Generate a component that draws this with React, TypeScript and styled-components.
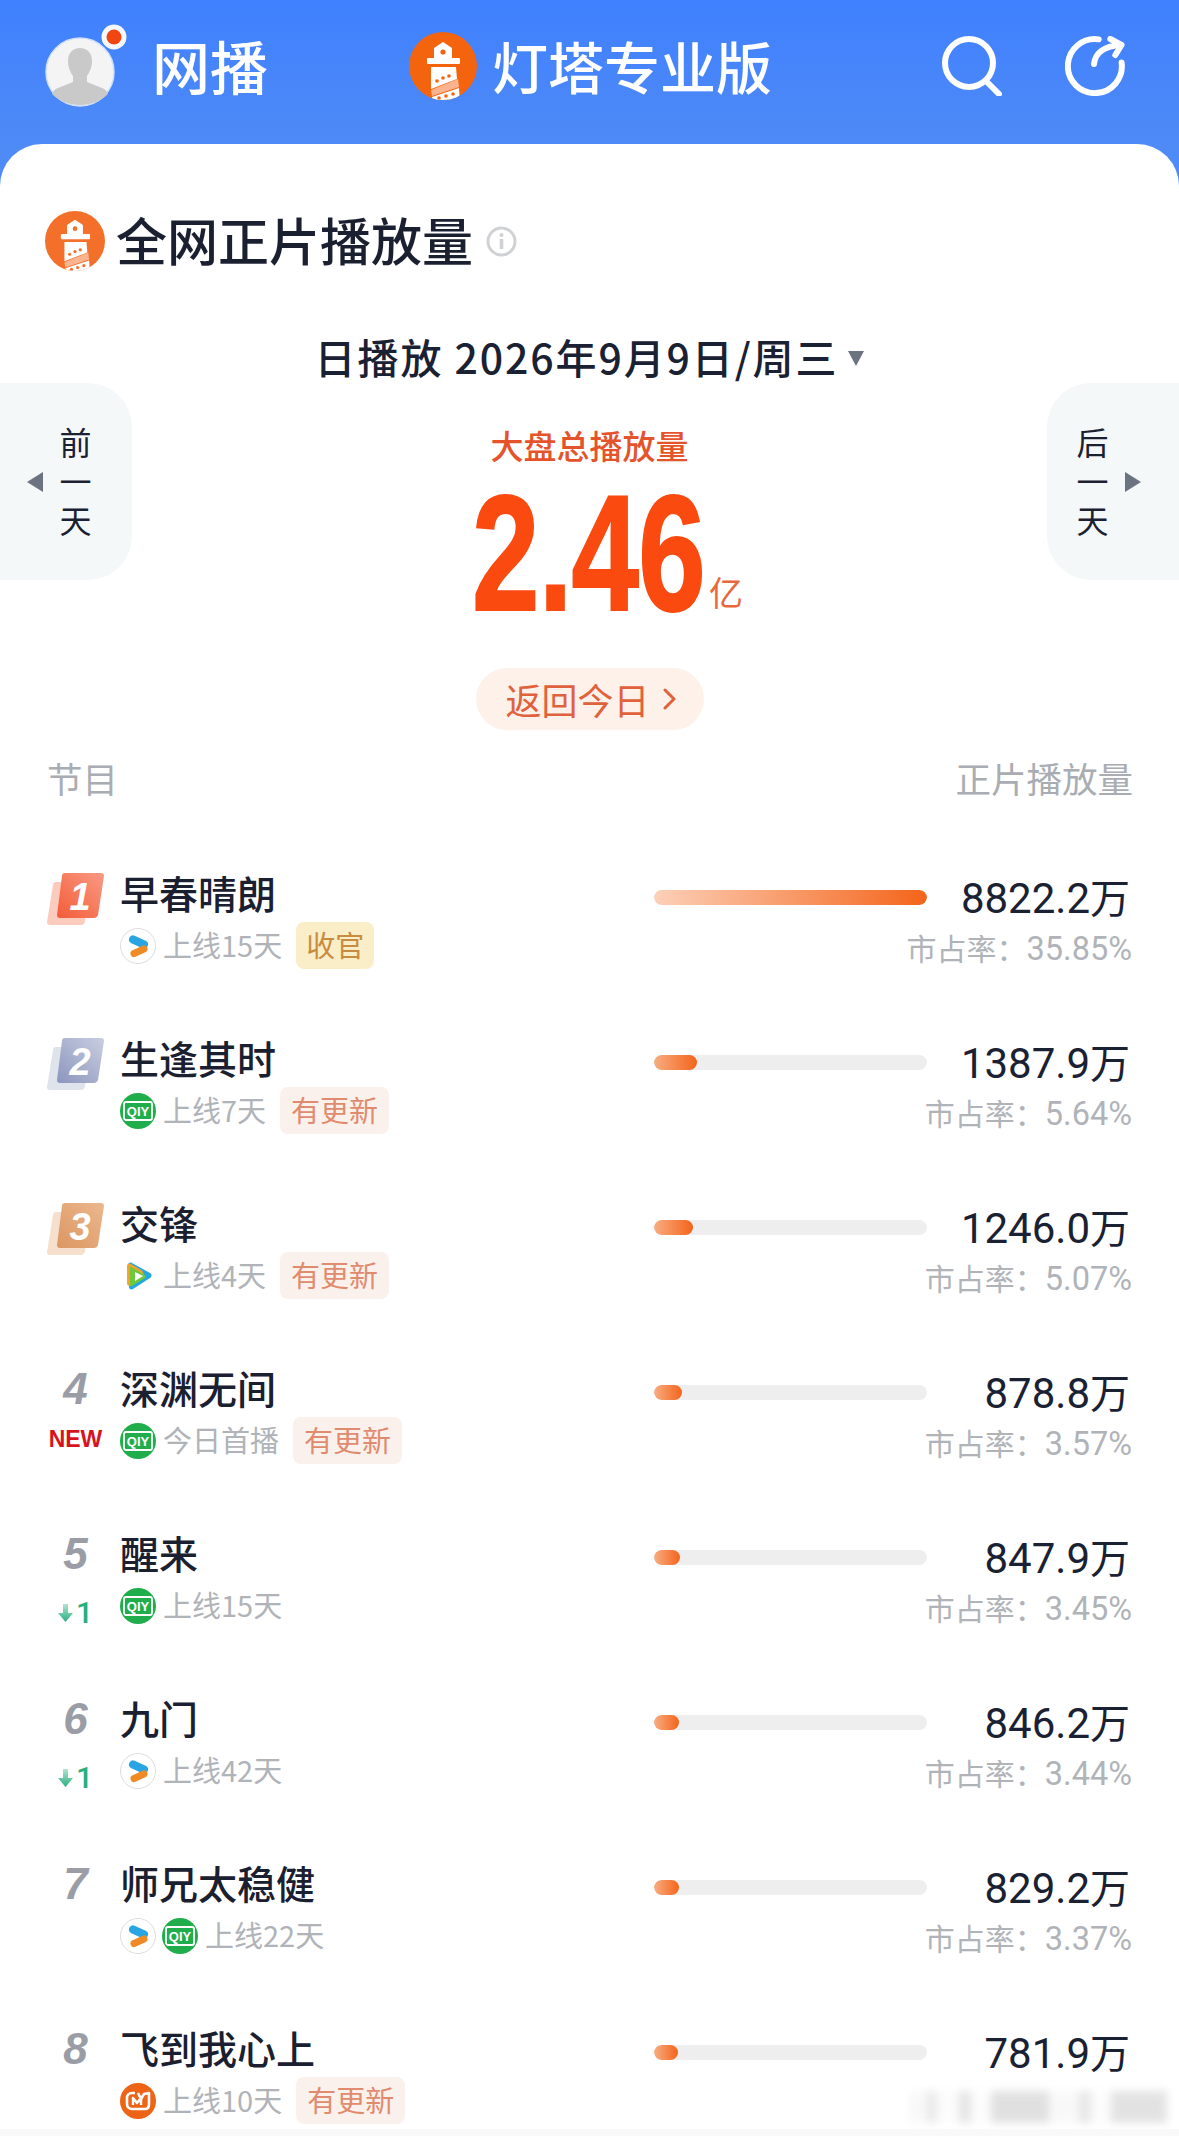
import React from 'react';
import styled, { createGlobalStyle } from 'styled-components';

const GlobalStyle = createGlobalStyle`
  html, body {
    margin: 0;
    padding: 0;
    background: #fff;
  }
  * {
    box-sizing: border-box;
  }
`;

const CJK = `"Noto Sans CJK SC", "Noto Sans", sans-serif`;

const Page = styled.div`
  position: relative;
  width: 1179px;
  height: 2136px;
  overflow: hidden;
  font-family: ${CJK};
  background: linear-gradient(180deg, #3f80fe 0, #4f8bf6 150px);
`;

const Header = styled.header`
  display: flex;
  align-items: center;
  height: 144px;
  padding: 0 54px 12px 45px;
  color: #fff;
`;

const HeaderTitle = styled.span`
  margin-left: 24px;
  margin-top: -3px;
  font-size: 58px;
  line-height: 70px;
  font-weight: 500;
`;

const Brand = styled.div`
  display: flex;
  align-items: center;
  gap: 15px;
  margin-left: 141px;
`;

const BrandName = styled.span`
  margin-top: -3px;
  font-size: 56px;
  line-height: 70px;
  font-weight: 500;
`;

const HeaderActions = styled.div`
  display: flex;
  align-items: center;
  gap: 63px;
  margin-left: auto;
`;

const Card = styled.main`
  height: 1992px;
  padding-top: 67px;
  background: #fff;
  border-radius: 42px 42px 0 0;
`;

const CardTitle = styled.div`
  display: flex;
  align-items: center;
  height: 60px;
  padding-left: 45px;
`;

const CardTitleText = styled.h1`
  margin: -4px 13px 0 11px;
  font-size: 51px;
  line-height: 60px;
  font-weight: 500;
  color: #1a2030;
`;

const DateRow = styled.div`
  display: flex;
  align-items: center;
  justify-content: center;
  gap: 10px;
  height: 50px;
  margin-top: 60px;
  font-size: 41px;
  line-height: 46px;
  font-weight: 500;
  letter-spacing: 1.9px;
  color: #1a2133;
`;

const DateCaret = styled.i`
  width: 0;
  height: 0;
  margin-top: 4px;
  border-left: 8px solid transparent;
  border-right: 8px solid transparent;
  border-top: 15px solid #6b7280;
`;

const Hero = styled.section`
  display: flex;
  align-items: flex-start;
  justify-content: space-between;
  margin-top: 2px;
`;

const SideButton = styled.div<{ $side: 'left' | 'right' }>`
  display: flex;
  flex-direction: ${({ $side }) => ($side === 'left' ? 'row' : 'row-reverse')};
  align-items: center;
  gap: 16px;
  width: 132px;
  height: 197px;
  padding-bottom: 3px;
  padding-left: ${({ $side }) => ($side === 'left' ? '27px' : '0')};
  padding-right: ${({ $side }) => ($side === 'right' ? '38px' : '0')};
  background: #f5f8f8;
  border-radius: ${({ $side }) =>
    $side === 'left' ? '0 44px 44px 0' : '44px 0 0 44px'};
`;

const SideArrow = styled.i<{ $side: 'left' | 'right' }>`
  flex: none;
  width: 0;
  height: 0;
  margin-top: 3px;
  border-top: 10px solid transparent;
  border-bottom: 10px solid transparent;
  ${({ $side }) =>
    $side === 'left'
      ? 'border-right: 16px solid #6b7280;'
      : 'border-left: 16px solid #6b7280;'}
`;

const SideLabel = styled.div`
  width: 33px;
  font-size: 32px;
  line-height: 39px;
  text-align: center;
  color: #1a2133;
`;

const HeroCenter = styled.div`
  display: flex;
  flex-direction: column;
  align-items: center;
  height: 235px;
  padding-top: 42px;
`;

const HeroLabel = styled.div`
  font-size: 33px;
  line-height: 40px;
  font-weight: 500;
  color: #e5532b;
`;

const HeroNumberRow = styled.div`
  display: flex;
  align-items: flex-end;
  margin: 23px 0 0 36px;
  height: 130px;
`;

const HeroNumber = styled.div`
  width: 237px;
  font-family: "Liberation Sans", Arial, sans-serif;
  font-size: 166px;
  line-height: 130px;
  font-weight: 700;
  letter-spacing: -1px;
  color: #fb4a10;
  transform: scaleX(0.73);
  transform-origin: left center;
  -webkit-text-stroke: 2px #fb4a10;
`;

const HeroUnit = styled.span`
  margin-bottom: 4px;
  font-size: 34px;
  line-height: 44px;
  color: #e9673c;
`;

const TodayPill = styled.div`
  display: flex;
  align-items: center;
  justify-content: flex-start;
  gap: 13px;
  width: 228px;
  height: 62px;
  margin: 50px auto 0;
  padding-left: 30px;
  font-size: 36px;
  line-height: 58px;
  color: #e0623c;
  background: #fdf1ea;
  border-radius: 31px;
`;

const TableHead = styled.div`
  display: flex;
  justify-content: space-between;
  margin-top: 26px;
  padding: 0 46px 0 47px;
  font-size: 35.5px;
  line-height: 44px;
  color: #a9adb3;
`;

const RowList = styled.div`
  margin-top: 70px;
`;

const Row = styled.article`
  position: relative;
  display: flex;
  height: 165px;
  padding: 0 47px;
`;

const RankCol = styled.div`
  display: flex;
  flex-direction: column;
  align-items: center;
  flex: none;
  width: 57px;
  margin-right: 16px;
`;

const RankCell = styled.div`
  display: flex;
  align-items: center;
  justify-content: center;
  height: 48px;
`;

const RankNumber = styled.span`
  font-family: "Liberation Sans", Arial, sans-serif;
  font-size: 44px;
  line-height: 48px;
  font-weight: 700;
  font-style: italic;
  color: #9a9da6;
`;

const RankBadgeWrap = styled.div`
  height: 52px;
  margin-top: 3px;
`;

const RankNote = styled.div<{ $down?: boolean }>`
  display: flex;
  align-items: center;
  justify-content: center;
  height: 47px;
  margin-top: ${({ $down }) => ($down ? '11px' : '3px')};
  gap: 3px;
`;

const NewMark = styled.span`
  font-family: "Liberation Sans", Arial, sans-serif;
  font-size: 23px;
  font-weight: 700;
  color: #d8131f;
`;

const DownValue = styled.span`
  font-family: Roboto, sans-serif;
  font-size: 30px;
  font-weight: 500;
  color: #26b07e;
`;

const InfoCol = styled.div`
  flex: 1;
  min-width: 0;
`;

const ShowName = styled.h2`
  margin: -2px 0 2px;
  font-size: 39px;
  line-height: 48px;
  font-weight: 500;
  color: #1a2030;
`;

const MetaRow = styled.div`
  display: flex;
  align-items: center;
  height: 47px;
  margin-top: 6px;
`;

const PlatformIcons = styled.div`
  display: flex;
  gap: 6px;
  margin-right: 7px;
`;

const MetaText = styled.span`
  margin-top: -2px;
  font-size: 29px;
  line-height: 47px;
  color: #b0b3b8;
`;

const Tag = styled.span<{ $tone: 'gold' | 'rose' }>`
  height: 47px;
  margin-left: 14px;
  padding: 0 ${({ $tone }) => ($tone === 'gold' ? '10px' : '11px')};
  font-size: 29px;
  line-height: 45px;
  border-radius: 8px;
  color: ${({ $tone }) => ($tone === 'gold' ? '#c98c3e' : '#e08b6e')};
  background: ${({ $tone }) => ($tone === 'gold' ? '#faeec9' : '#fbf1ec')};
`;

const BarTrack = styled.div`
  flex: none;
  width: 273px;
  height: 15px;
  margin-top: 20px;
  background: #eeeeee;
  border-radius: 8px;
  overflow: hidden;
`;

const BarFill = styled.div<{ $full: boolean }>`
  height: 100%;
  border-radius: 8px;
  background: linear-gradient(
    90deg,
    ${({ $full }) => ($full ? '#fcd0b8' : '#f8ad82')},
    #f4641a
  );
`;

const ValueCol = styled.div`
  flex: none;
  width: 205px;
`;

const PlayValue = styled.div`
  height: 48px;
  margin-top: 2px;
  padding-right: 2px;
  font-size: 40px;
  line-height: 48px;
  text-align: right;
  color: #1a2133;
`;

const ValueDigits = styled.span`
  font-family: Roboto, sans-serif;
  font-size: 42px;
`;

const Share = styled.div`
  display: flex;
  justify-content: flex-end;
  align-items: baseline;
  margin-top: 5px;
  font-size: 30px;
  line-height: 44px;
  white-space: nowrap;
  color: #b0b3b8;
`;

const ShareDigits = styled.span`
  font-family: Roboto, sans-serif;
  font-size: 32.5px;
`;

const Smudge = styled.div`
  position: absolute;
  top: 66px;
  right: 12px;
  width: 258px;
  height: 32px;
  filter: blur(4px);
  opacity: 0.55;
  background: linear-gradient(
    90deg,
    #f4f4f4 0,
    #f4f4f4 18px,
    #d8d8d8 18px,
    #d8d8d8 28px,
    #fafafa 28px,
    #fafafa 50px,
    #d0d0d0 50px,
    #d0d0d0 62px,
    #fafafa 62px,
    #fafafa 82px,
    #c8c8c8 82px,
    #c8c8c8 140px,
    #f4f4f4 140px,
    #f4f4f4 170px,
    #d4d4d4 170px,
    #d4d4d4 182px,
    #fafafa 182px,
    #fafafa 202px,
    #cccccc 202px,
    #cccccc 258px
  );
`;

const BottomEdge = styled.div`
  position: absolute;
  left: 0;
  right: 0;
  bottom: 0;
  height: 7px;
  background: #f9f9fa;
`;

const AvatarIcon = () => (
  <svg width="83" height="84" viewBox="0 0 83 84">
    <circle cx="35" cy="48" r="34" fill="#f4f4f4" stroke="#cfe0fb" strokeWidth="1.5" />
    <path
      d="M23 37c0-8 5-13 12-13s12 5 12 13c0 7-3 12-5 15v6l15 6c3 1 5 3 6 6-7 7-17 11-28 11S14 77 7 70c1-3 3-5 6-6l15-6v-6c-2-3-5-8-5-15z"
      fill="#c9c9c9"
    />
    <circle cx="69" cy="13" r="12.5" fill="#f6f8fc" />
    <circle cx="69" cy="13" r="7.5" fill="#f0460f" />
  </svg>
);

const LighthouseLogo = ({ size, bg }: { size: number; bg: string }) => (
  <svg width={size} height={size} viewBox="0 0 68 68">
    <defs>
      <clipPath id={`logo-${size}`}>
        <circle cx="34" cy="34" r="34" />
      </clipPath>
    </defs>
    <circle cx="34" cy="34" r="34" fill={bg} />
    <g clipPath={`url(#logo-${size})`}>
      <path d="M34 10l9 6v10H25V16z" fill="#fff" />
      <circle cx="34" cy="20" r="2.6" fill={bg} />
      <rect x="18" y="26" width="33" height="6" rx="1" fill="#fff" />
      <path d="M22 35h25l1 12-26 10z" fill="#fff" />
      <path d="M22 58l27-11 1 8-27 9z" fill="#fbb48e" />
      <path d="M23 65l27-9 1 14H24z" fill="#fff" />
      <circle cx="28" cy="49" r="1.8" fill={bg} />
      <circle cx="34" cy="46" r="1.8" fill={bg} />
      <circle cx="40" cy="44" r="1.8" fill={bg} />
      <circle cx="30" cy="66" r="1.8" fill={bg} />
      <circle cx="37" cy="64" r="1.8" fill={bg} />
      <circle cx="44" cy="62" r="1.8" fill={bg} />
    </g>
  </svg>
);

const SearchIcon = () => (
  <svg width="60" height="60" viewBox="0 0 60 60" fill="none" stroke="#fff" strokeWidth="6" strokeLinecap="round">
    <circle cx="27" cy="27" r="24" />
    <path d="M45 46l12 12" />
  </svg>
);

const ShareIcon = () => (
  <svg width="60" height="60" viewBox="0 0 60 60" fill="none" stroke="#fff" strokeWidth="6" strokeLinecap="round" strokeLinejoin="round">
    <path d="M33.7 3.4A27 27 0 1 0 56.6 26.5" />
    <path d="M29 28c1-10 9-18 27-19" />
    <path d="M45.300 3L56.500 9 50.300 19" />
  </svg>
);

const InfoIcon = () => (
  <svg width="31" height="31" viewBox="0 0 31 31" fill="none">
    <circle cx="15.500" cy="15.500" r="13.500" stroke="#cfd1d4" strokeWidth="3" />
    <circle cx="15.500" cy="9" r="2" fill="#cfd1d4" />
    <rect x="13.700" y="13" width="3.600" height="10" fill="#cfd1d4" />
  </svg>
);

const badgeColors: Record<number, [string, string, string]> = {
  1: ['#f99a84', '#f35c38', '#fbcbbd'],
  2: ['#c9cee1', '#8c96bd', '#dfe3ec'],
  3: ['#ecb78e', '#db9762', '#f7dfcd'],
};

const RankBadge = ({ rank }: { rank: number }) => {
  const [from, to, back] = badgeColors[rank];
  return (
    <svg width="57" height="52" viewBox="0 0 57 52">
      <defs>
        <linearGradient id={`badge-${rank}`} x1="1" y1="0" x2="0" y2="1">
          <stop offset="0" stopColor={from} />
          <stop offset="1" stopColor={to} />
        </linearGradient>
      </defs>
      <path d="M9 9h32c2 0 3 1 3 3l-6 36c0 2-2 4-4 4H3c-2 0-3-1-3-3l6-37c0-2 1-3 3-3z" fill={back} />
      <path d="M18 0h36c2 0 3 1 3 3l-6 39c-1 2-2 3-4 3H13c-2 0-3-1-3-3l5-39c0-2 1-3 3-3z" fill={`url(#badge-${rank})`} />
      <text x="33" y="37" textAnchor="middle" fontFamily="Liberation Sans, sans-serif" fontSize="38" fontWeight="700" fontStyle="italic" fill="#fff">
        {rank}
      </text>
    </svg>
  );
};

const DownArrow = () => (
  <svg width="15" height="18" viewBox="0 0 15 18">
    <defs>
      <linearGradient id="down-fade" x1="0" y1="0" x2="0" y2="1">
        <stop offset="0" stopColor="#26b07e" stopOpacity="0.35" />
        <stop offset="1" stopColor="#26b07e" />
      </linearGradient>
    </defs>
    <path d="M5 0h5v9h5l-7.500 9L0 9h5z" fill="url(#down-fade)" />
  </svg>
);

type Platform = 'youku' | 'iqiyi' | 'tencent' | 'mango';

const PlatformIcon = ({ kind }: { kind: Platform }) => {
  if (kind === 'youku') {
    return (
      <svg width="36" height="36" viewBox="0 0 36 36">
        <circle cx="18" cy="18" r="17.500" fill="#fff" stroke="#dcdcdc" />
        <path d="M13 11.500l11 5" stroke="#2aa5e4" strokeWidth="8" strokeLinecap="round" />
        <path d="M14 25.500l10-4.500" stroke="#f08a24" strokeWidth="7" strokeLinecap="round" />
      </svg>
    );
  }
  if (kind === 'iqiyi') {
    return (
      <svg width="36" height="36" viewBox="0 0 36 36">
        <circle cx="18" cy="18" r="18" fill="#1fae4b" />
        <path d="M6 9h24c1 0 2 1 2 2v14c0 1-1 2-2 2H6c-1 0-2-1-2-2V11c0-1 1-2 2-2z" fill="none" stroke="#fff" strokeWidth="1.800" />
        <text x="18" y="23" textAnchor="middle" fontFamily="Liberation Sans, sans-serif" fontSize="13" fontWeight="700" fill="#fff">
          QIY
        </text>
      </svg>
    );
  }
  if (kind === 'tencent') {
    return (
      <svg width="36" height="36" viewBox="0 0 36 36">
        <path d="M8 7c0-2 2-3 4-2l18 10c2 1 2 4 0 5L13 31c-2 1-4 0-4-2z" fill="#22a7e0" />
        <path d="M7 8c0-2 2-3 4-2l10 6c2 1 3 4 3 6l-12 9c-2 2-5 1-5-2z" fill="#f3a32c" />
        <path d="M11 9l14 8c1 1 1 2 0 3l-13 8c-1 1-2 0-2-1V10c0-1 0-2 1-1z" fill="#6fc83c" />
        <path d="M15 14l8 4-8 5z" fill="#fff" />
      </svg>
    );
  }
  return (
    <svg width="36" height="36" viewBox="0 0 36 36" fill="none">
      <circle cx="18" cy="18" r="18" fill="#ee6417" />
      <path d="M15 10h-3c-3 0-5 2-5 5v6c0 3 2 5 5 5h13c3 0 4-2 4-5V10l-5 1-3 5-3-6" stroke="#fff" strokeWidth="2.600" strokeLinejoin="round" />
      <path d="M13 22v-7l4 5 4-5v7" stroke="#fff" strokeWidth="2.400" strokeLinejoin="round" />
    </svg>
  );
};

interface Show {
  rank: number;
  name: string;
  platforms: Platform[];
  meta: string;
  tag?: { label: string; tone: 'gold' | 'rose' };
  note?: 'new' | 'down';
  fill: number;
  value: string;
  share?: string;
}

const update = { label: '有更新', tone: 'rose' as const };

const shows: Show[] = [
  { rank: 1, name: '早春晴朗', platforms: ['youku'], meta: '上线15天', tag: { label: '收官', tone: 'gold' }, fill: 273, value: '8822.2', share: '35.85%' },
  { rank: 2, name: '生逢其时', platforms: ['iqiyi'], meta: '上线7天', tag: update, fill: 43, value: '1387.9', share: '5.64%' },
  { rank: 3, name: '交锋', platforms: ['tencent'], meta: '上线4天', tag: update, fill: 39, value: '1246.0', share: '5.07%' },
  { rank: 4, name: '深渊无间', platforms: ['iqiyi'], meta: '今日首播', tag: update, note: 'new', fill: 28, value: '878.8', share: '3.57%' },
  { rank: 5, name: '醒来', platforms: ['iqiyi'], meta: '上线15天', note: 'down', fill: 26, value: '847.9', share: '3.45%' },
  { rank: 6, name: '九门', platforms: ['youku'], meta: '上线42天', note: 'down', fill: 25, value: '846.2', share: '3.44%' },
  { rank: 7, name: '师兄太稳健', platforms: ['youku', 'iqiyi'], meta: '上线22天', fill: 25, value: '829.2', share: '3.37%' },
  { rank: 8, name: '飞到我心上', platforms: ['mango'], meta: '上线10天', tag: update, fill: 24, value: '781.9' },
];

const ShowRow = ({ show }: { show: Show }) => (
  <Row>
    <RankCol>
      {show.rank <= 3 ? (
        <RankBadgeWrap>
          <RankBadge rank={show.rank} />
        </RankBadgeWrap>
      ) : (
        <RankCell>
          <RankNumber>{show.rank}</RankNumber>
        </RankCell>
      )}
      {show.note === 'new' && (
        <RankNote>
          <NewMark>NEW</NewMark>
        </RankNote>
      )}
      {show.note === 'down' && (
        <RankNote $down>
          <DownArrow />
          <DownValue>1</DownValue>
        </RankNote>
      )}
    </RankCol>
    <InfoCol>
      <ShowName>{show.name}</ShowName>
      <MetaRow>
        <PlatformIcons>
          {show.platforms.map(p => (
            <PlatformIcon key={p} kind={p} />
          ))}
        </PlatformIcons>
        <MetaText>{show.meta}</MetaText>
        {show.tag && <Tag $tone={show.tag.tone}>{show.tag.label}</Tag>}
      </MetaRow>
    </InfoCol>
    <BarTrack>
      <BarFill $full={show.fill > 100} style={{ width: show.fill }} />
    </BarTrack>
    <ValueCol>
      <PlayValue>
        <ValueDigits>{show.value}</ValueDigits>万
      </PlayValue>
      {show.share && (
        <Share>
          市占率：<ShareDigits>{show.share}</ShareDigits>
        </Share>
      )}
    </ValueCol>
    {!show.share && <Smudge />}
  </Row>
);

export default function App() {
  return (
    <Page>
      <GlobalStyle />
      <Header>
        <AvatarIcon />
        <HeaderTitle>网播</HeaderTitle>
        <Brand>
          <LighthouseLogo size={68} bg="#f4640f" />
          <BrandName>灯塔专业版</BrandName>
        </Brand>
        <HeaderActions>
          <SearchIcon />
          <ShareIcon />
        </HeaderActions>
      </Header>
      <Card>
        <CardTitle>
          <LighthouseLogo size={60} bg="#f4702a" />
          <CardTitleText>全网正片播放量</CardTitleText>
          <InfoIcon />
        </CardTitle>
        <DateRow>
          日播放 2026年9月9日/周三
          <DateCaret />
        </DateRow>
        <Hero>
          <SideButton $side="left">
            <SideArrow $side="left" />
            <SideLabel>前一天</SideLabel>
          </SideButton>
          <HeroCenter>
            <HeroLabel>大盘总播放量</HeroLabel>
            <HeroNumberRow>
              <HeroNumber>2.46</HeroNumber>
              <HeroUnit>亿</HeroUnit>
            </HeroNumberRow>
          </HeroCenter>
          <SideButton $side="right">
            <SideArrow $side="right" />
            <SideLabel>后一天</SideLabel>
          </SideButton>
        </Hero>
        <TodayPill>
          返回今日
          <svg width="13" height="22" viewBox="0 0 13 22" fill="none" stroke="#e0623c" strokeWidth="3" strokeLinecap="round" strokeLinejoin="round">
            <path d="M2 2l9 9-9 9" />
          </svg>
        </TodayPill>
        <TableHead>
          <span>节目</span>
          <span>正片播放量</span>
        </TableHead>
        <RowList>
          {shows.map(show => (
            <ShowRow key={show.rank} show={show} />
          ))}
        </RowList>
      </Card>
      <BottomEdge />
    </Page>
  );
}
